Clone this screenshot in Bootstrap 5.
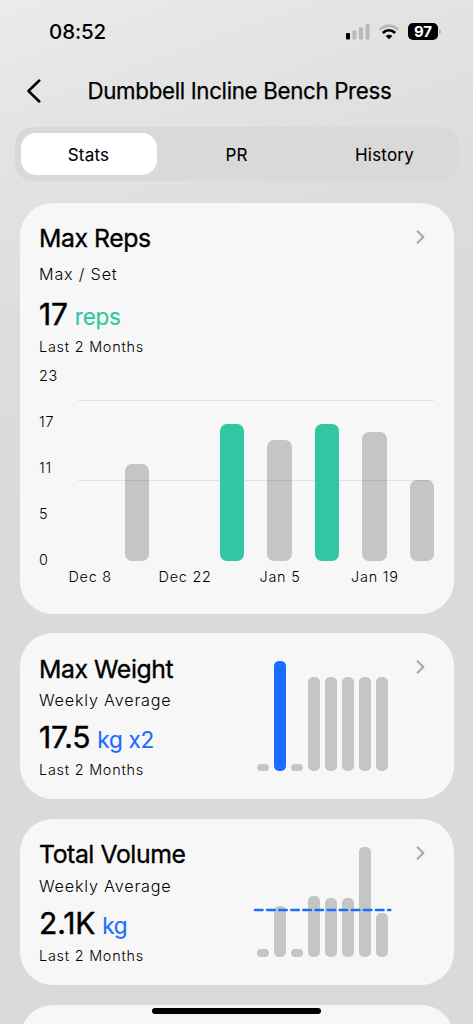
<!DOCTYPE html>
<html lang="en">
<head>
<meta charset="utf-8">
<meta name="viewport" content="width=device-width, initial-scale=1">
<title>Dumbbell Incline Bench Press</title>
<link href="https://cdn.jsdelivr.net/npm/bootstrap@5.3.0/dist/css/bootstrap.min.css" rel="stylesheet">
<style>
  html, body { height: 1024px; overflow: hidden; }
  body {
    font-family: Inter, "Liberation Sans", sans-serif; color: #000;
    background: linear-gradient(160deg, #ebebeb 0, #e4e4e4 130px, #dcdcdc 330px, #dadada 480px);
  }
  .screen { width: 473px; height: 1024px; overflow: hidden; }
  .screen svg { display: block; flex: none; }
  .status { height: 63px; padding: 0 32px 0 49px; }
  .clock { font-size: 20.5px; font-weight: 500; line-height: 25px; letter-spacing: -.1px; }
  .charge { width: 30px; height: 17px; border-radius: 5px; background: #000; color: #fff; font-size: 15px; font-weight: 700; line-height: 17px; }
  .charge-tip { width: 2px; height: 5px; border-radius: 0 2px 2px 0; background: #b5b5b5; margin-left: 1px; }
  .topbar { height: 56px; padding-left: 27px; }
  .page-title { font-size: 22.3px; font-weight: 400; -webkit-text-stroke: .25px #000; letter-spacing: -.33px; margin: 0 0 0 45.5px; line-height: 28px; white-space: nowrap; }
  .tabs { height: 54px; margin: 8px 14.5px 0; padding: 6px 0; border-radius: 18px; background: #d9d9d9; }
  .tabs .nav-link { flex: 1 1 0; height: 42px; margin: 0 6px; padding: 0; border-radius: 15px; color: #000; font-size: 17px; line-height: 44px; letter-spacing: .2px; text-align: center; -webkit-text-stroke: .1px #000; }
  .tabs .nav-link.active { background: #fff; color: #000; }
  .stat-list { margin: 21.6px 19.5px 0; gap: 19.5px; }
  .stat { border: 0; border-radius: 33px; background: #f7f7f7; padding: 0 19px 0 19.5px; color: #000; }
  .stat-lg { height: 411px; }
  .stat-sm { height: 166.3px; }
  .name { font-size: 24.8px; font-weight: 400; letter-spacing: -.43px; -webkit-text-stroke: .35px #000; line-height: 30px; margin: 0; white-space: nowrap; }
  .sub { font-size: 16.2px; line-height: 20px; letter-spacing: .8px; font-weight: 300; white-space: nowrap; }
  .value { font-size: 30px; line-height: 36px; letter-spacing: -.1px; -webkit-text-stroke: .45px #000; white-space: nowrap; }
  .unit { font-size: 22.5px; letter-spacing: -.25px; margin-left: -1.5px; -webkit-text-stroke: .15px currentColor; }
  .tone-green { color: #30c7a2; }
  .tone-blue { color: #1a6dff; }
  .note, .axis { font-size: 14.4px; line-height: 18px; letter-spacing: .78px; font-weight: 300; white-space: nowrap; }
  .chart-y { width: 38.5px; height: 202px; }
  .plot { width: 356.5px; height: 161px; margin-top: 33px; border-top: 1px solid #e2e2e2; background: linear-gradient(#e2e2e2, #e2e2e2) 0 79px / 100% 1px no-repeat; }
  .plot .bar-v { width: 24.4px; border-radius: 7px; }
  .bar-v { background: rgba(0, 0, 0, .2); }
  .bar-green { background: #30c7a2; }
  .bar-blue { background: #1a6dff; }
  .chart-x { margin: -1px 0 0 39px; height: 18px; }
  .chart-x span { width: 24.4px; display: flex; justify-content: center; }
  .mini { width: 131px; height: 110px; margin-right: 27.3px; }
  .mini .bar-v { width: 12px; border-radius: 5px; }
  .avg { left: -4.500px; top: 61px; }
  .home-line { width: 169px; height: 6px; border-radius: 3px; background: #000; bottom: 10px; left: 152px; }
</style>
</head>
<body>
<div class="screen position-relative d-flex flex-column">
  <div class="status d-flex align-items-center justify-content-between flex-shrink-0">
    <span class="clock">08:52</span>
    <div class="d-flex align-items-center">
      <svg width="24" height="16" viewBox="0 0 24 16"><rect y="9" width="4" height="6.5" rx="1" fill="#000"/><g fill="#bababa"><rect x="6.4" y="6.5" width="4" height="9" rx="1"/><rect x="13" y="3.3" width="4" height="12.2" rx="1"/><rect x="19.6" y="0" width="4" height="15.5" rx="1"/></g></svg>
      <svg class="ms-2" width="22" height="16" viewBox="0 0 22 16" fill="none"><path d="M1.7 5.7C7 .5 15 .5 20.300 5.700" stroke="#b8b8b8" stroke-width="2.700"/><path d="M4.800 9C8.500 5.500 13.500 5.500 17.200 9" stroke="#000" stroke-width="2.700"/><path d="M7.700 12C9.600 10.200 12.400 10.200 14.300 12L11 15.300Z" fill="#000"/></svg>
      <div class="charge text-center ms-2">97</div><span class="charge-tip"></span>
    </div>
  </div>
  <div class="topbar d-flex align-items-center flex-shrink-0">
    <svg width="15" height="24" viewBox="0 0 15 24" fill="none" stroke="#000" stroke-width="2.500" stroke-linecap="round" stroke-linejoin="round"><path d="M12.300 1.500 1.500 12 12.300 22.500"/></svg>
    <h1 class="page-title">Dumbbell Incline Bench Press</h1>
  </div>
  <nav class="tabs nav nav-pills flex-shrink-0 flex-nowrap">
    <a class="nav-link active" href="#">Stats</a>
    <a class="nav-link" href="#">PR</a>
    <a class="nav-link" href="#">History</a>
  </nav>
  <main class="stat-list d-flex flex-column">
    <section class="card stat stat-lg flex-shrink-0">
      <div class="d-flex justify-content-between" style="padding-top:20px">
        <h2 class="name">Max Reps</h2>
        <svg width="9" height="14" viewBox="0 0 9 14" fill="none" stroke="#a6a6a6" stroke-width="2" style="margin:7px 10px 0 0"><path d="M1 .8 7.300 7 1 13.200"/></svg>
      </div>
      <div class="sub" style="margin-top:11px">Max / Set</div>
      <div class="value" style="margin-top:12px">17 <span class="unit tone-green">reps</span></div>
      <div class="note" style="margin-top:3px">Last 2 Months</div>
      <div class="d-flex" style="margin-top:11px">
        <div class="axis chart-y d-flex flex-column justify-content-between flex-shrink-0"><span>23</span><span>17</span><span>11</span><span>5</span><span>0</span></div>
        <div class="plot d-flex align-items-end justify-content-between">
          <div class="bar-v" style="height:0"></div>
          <div class="bar-v" style="height:96.500px"></div>
          <div class="bar-v" style="height:0"></div>
          <div class="bar-v bar-green" style="height:136.500px"></div>
          <div class="bar-v" style="height:120.500px"></div>
          <div class="bar-v bar-green" style="height:136.500px"></div>
          <div class="bar-v" style="height:128.500px"></div>
          <div class="bar-v" style="height:80.500px"></div>
        </div>
      </div>
      <div class="axis chart-x d-flex justify-content-between"><span>Dec 8</span><span></span><span>Dec 22</span><span></span><span>Jan 5</span><span></span><span>Jan 19</span><span></span></div>
    </section>

    <section class="card stat stat-sm flex-shrink-0 flex-row">
      <div class="flex-grow-1" style="padding-top:20.500px">
        <h2 class="name">Max Weight</h2>
        <div class="sub" style="margin-top:6.500px">Weekly Average</div>
        <div class="value" style="margin-top:9px">17.5 <span class="unit tone-blue">kg x2</span></div>
        <div class="note" style="margin-top:3px">Last 2 Months</div>
      </div>
      <div class="mini d-flex align-items-end justify-content-between" style="margin-top:28.300px">
        <div class="bar-v" style="height:7.500px"></div><div class="bar-v bar-blue" style="height:110px"></div><div class="bar-v" style="height:7.500px"></div><div class="bar-v" style="height:94px"></div><div class="bar-v" style="height:94px"></div><div class="bar-v" style="height:94px"></div><div class="bar-v" style="height:94px"></div><div class="bar-v" style="height:94px"></div>
      </div>
      <svg width="9" height="14" viewBox="0 0 9 14" fill="none" stroke="#a6a6a6" stroke-width="2" style="margin:27px 10px 0 0"><path d="M1 .8 7.300 7 1 13.200"/></svg>
    </section>

    <section class="card stat stat-sm flex-shrink-0 flex-row">
      <div class="flex-grow-1" style="padding-top:20px">
        <h2 class="name">Total Volume</h2>
        <div class="sub" style="margin-top:7px">Weekly Average</div>
        <div class="value" style="margin-top:9px">2.1K <span class="unit tone-blue">kg</span></div>
        <div class="note" style="margin-top:3px">Last 2 Months</div>
      </div>
      <div class="mini position-relative d-flex align-items-end justify-content-between" style="margin-top:28px">
        <svg class="avg position-absolute" width="140" height="4" viewBox="0 0 140 4" stroke="#1a6dff" stroke-width="2.500" stroke-linecap="round" stroke-dasharray="7.500 4.600"><path d="M2 2H137.300"/></svg>
        <div class="bar-v" style="height:7.500px"></div><div class="bar-v" style="height:51px"></div><div class="bar-v" style="height:7.500px"></div><div class="bar-v" style="height:60.500px"></div><div class="bar-v" style="height:59px"></div><div class="bar-v" style="height:59px"></div><div class="bar-v" style="height:110px"></div><div class="bar-v" style="height:43.500px"></div>
      </div>
      <svg width="9" height="14" viewBox="0 0 9 14" fill="none" stroke="#a6a6a6" stroke-width="2" style="margin:27px 10px 0 0"><path d="M1 .8 7.300 7 1 13.200"/></svg>
    </section>

    <section class="card stat stat-sm flex-shrink-0"></section>
  </main>
  <div class="home-line position-absolute"></div>
</div>
<script src="https://cdn.jsdelivr.net/npm/bootstrap@5.3.0/dist/js/bootstrap.bundle.min.js"></script>
</body>
</html>
